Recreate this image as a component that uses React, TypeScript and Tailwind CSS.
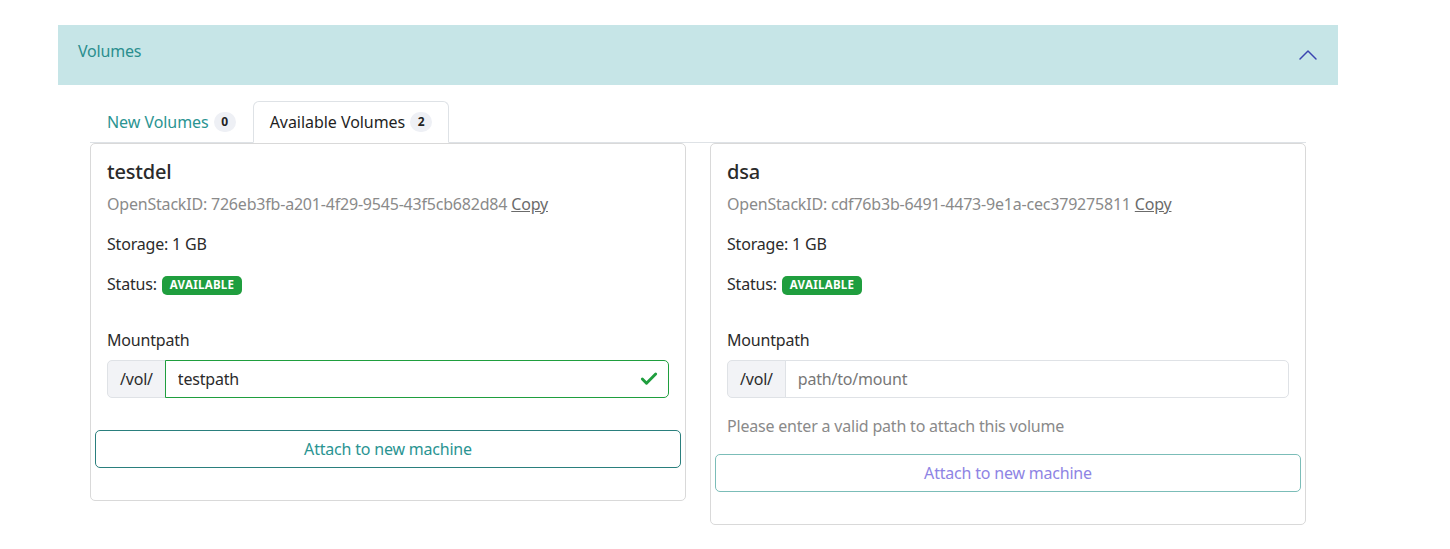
import { Check, ChevronUp } from "lucide-react";

type Volume = {
  name: string;
  openstackId: string;
  storage: string;
  mountpath: string;
};

const volumes: Volume[] = [
  { name: "testdel", openstackId: "726eb3fb-a201-4f29-9545-43f5cb682d84", storage: "1 GB", mountpath: "testpath" },
  { name: "dsa", openstackId: "cdf76b3b-6491-4473-9e1a-cec379275811", storage: "1 GB", mountpath: "" },
];

function CountBadge({ n }: { n: number }) {
  return (
    <span className="ml-[5px] inline-flex h-[20px] min-w-[22px] items-center justify-center rounded-full bg-[#eef0f5] px-[7px] text-[12px] font-bold tracking-normal text-[#222]">
      {n}
    </span>
  );
}

function VolumeCard({ volume }: { volume: Volume }) {
  const valid = volume.mountpath.length > 0;

  return (
    <div className="rounded-[5px] border border-[#d9d9d9] px-4 pt-4 pb-4">
      <h5 className="text-[20px] font-medium leading-6 text-[#2b2b2b]">{volume.name}</h5>
      <div className="mt-2 text-[16px] leading-6 text-[#8a8a8a]">
        OpenStackID: {volume.openstackId} <span className="cursor-pointer text-[#6b6b6b] underline">Copy</span>
      </div>
      <div className="mt-4 leading-6 text-[#2b2b2b]">Storage: {volume.storage}</div>
      <div className="mt-4 flex items-center leading-6 text-[#2b2b2b]">
        Status:
        <span className="mt-[2px] ml-[5px] inline-flex h-[19px] items-center rounded-[5px] bg-[#1f9e3e] px-[8px] text-[11.5px] font-bold tracking-[0.3px] text-white">
          AVAILABLE
        </span>
      </div>

      <div className="mt-8 leading-6 text-[#2b2b2b]">Mountpath</div>
      <div className="mt-2 flex h-[38px]">
        <span className="flex items-center rounded-l-[5px] border border-[#dfe2e6] bg-[#f2f3f6] px-3 text-[#2b2b2b]">
          /vol/
        </span>
        <div
          className={
            valid
              ? "-ml-px flex flex-1 items-center rounded-r-[5px] border border-[#1f9e3e] pr-[9px] pl-3"
              : "-ml-px flex flex-1 items-center rounded-r-[5px] border border-[#dfe2e6] pl-3"
          }
        >
          <input
            className="w-full bg-transparent text-[16px] tracking-[-0.2px] text-[#2b2b2b] outline-none placeholder:text-[#777]"
            defaultValue={volume.mountpath}
            placeholder="path/to/mount"
          />
          {valid ? <Check className="h-[20px] w-[20px] shrink-0 text-[#1f9e3e]" strokeWidth={3.5} /> : null}
        </div>
      </div>

      {!valid ? (
        <div className="mt-4 leading-6 text-[#8a8a8a]">Please enter a valid path to attach this volume</div>
      ) : null}

      <button
        className={
          valid
            ? "-mx-3 mt-8 mb-4 flex h-[38px] w-[calc(100%+24px)] items-center justify-center rounded-[5px] border border-[#2a7f7d] text-[#2a9492]"
            : "-mx-3 mt-4 mb-4 flex h-[38px] w-[calc(100%+24px)] items-center justify-center rounded-[5px] border border-[#7bbdb8] text-[#8e84e4]"
        }
      >
        Attach to new machine
      </button>
    </div>
  );
}

export default function App() {
  return (
    <div className="min-h-[549px] bg-white font-['Noto_Sans',sans-serif] text-[16px] tracking-[-0.2px]">
      <div className="ml-[58px] w-[1280px] pt-[25px]">
        <div className="flex h-[60px] items-center justify-between bg-[#c6e5e7] pr-[14px] pl-5">
          <span className="mb-2 text-[16px] text-[#2a8e8e]">Volumes</span>
          <ChevronUp className="h-[32px] w-[32px] text-[#3b44b0]" strokeWidth={1.1} />
        </div>

        <div className="ml-[32px] w-[1216px] pt-4">
          <div className="flex border-b border-[#dee2e6] tracking-[-0.05px]">
            <div className="-mb-px flex items-center border border-transparent px-4 py-2 leading-6 text-[#2a9492]">
              New Volumes
              <CountBadge n={0} />
            </div>
            <div className="-mb-px flex items-center rounded-t-[6px] border border-[#dee2e6] border-b-white bg-white px-4 py-2 leading-6 text-[#1f1f1f]">
              Available Volumes
              <CountBadge n={2} />
            </div>
          </div>

          <div className="grid grid-cols-[596px_596px] items-start gap-6">
            {volumes.map((v) => (
              <VolumeCard key={v.name} volume={v} />
            ))}
          </div>
        </div>
      </div>
    </div>
  );
}
